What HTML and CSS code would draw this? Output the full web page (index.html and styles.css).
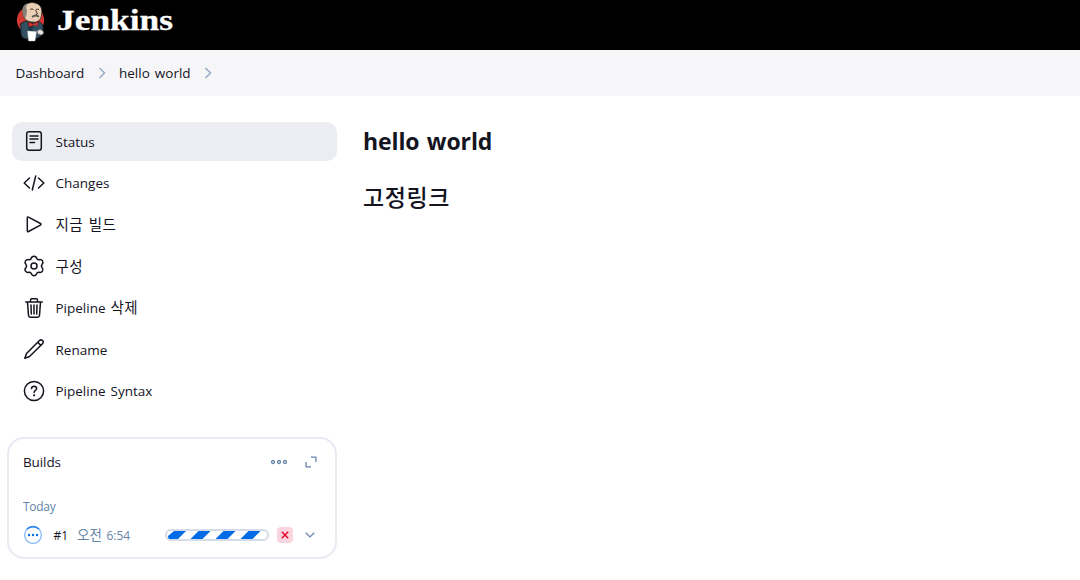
FILE: index.html
```html
<!DOCTYPE html>
<html lang="ko">
<head>
<meta charset="utf-8">
<title>hello world [Jenkins]</title>
<link rel="stylesheet" href="styles.css">
</head>
<body>
<header class="header">
  <svg class="mascot" width="30" height="42" viewBox="0 0 30 42">
    <circle cx="14.500" cy="20" r="13.600" fill="#d33833"/>
    <path d="M7 38 Q4 35 5 27 L4 24 Q9 20 15 21 L24 22 Q28 25 27 31 L25 36 L20 39 L10 39z" fill="#335061" stroke="#101a20" stroke-width=".8"/>
    <path d="M11 21 L20 22 L20 32 L13 31z" fill="#1d3444"/>
    <path d="M8 17 C5 8 9 3 16 2.500 C24 3 27 8 25.500 15 C25 20 21 23 17 22 C12 22 9 20 8 17z" fill="#e9d0b4" stroke="#3b2b25" stroke-width=".8"/>
    <path d="M7.800 17 C4.500 9 7.500 4 12 3.300 Q9 7 11 10 L10.500 15 L9.300 18z" fill="#858078"/>
    <path d="M14 9.500 q2-1.300 3.500 0 M20 9.500 q2-1 3 .3 M19.500 10 l2 4 -2 .5" fill="none" stroke="#4c3930" stroke-width="1"/>
    <path d="M16 17 q3.500-2.500 7-.3" fill="none" stroke="#5c5550" stroke-width="1.600"/>
    <path d="M12.500 22 L17 24 L22 21.500 L21.500 27 L17 25.500 L13 27z" fill="#d33833" stroke="#81120f" stroke-width=".6"/>
    <path d="M18 25 q4 0 6 5 l-3 3 -5-3z" fill="#335061"/>
    <path d="M11.500 31 L20.500 31.500 L19 41 L12.500 41z" fill="#fff" stroke="#bbb" stroke-width=".4"/>
    <path d="M21 31 q3-3 6 0 q2 3-2 4 l-3-1z" fill="#e7e2dc" stroke="#555" stroke-width=".5"/>
  </svg>
  <svg class="wordmark" width="120" height="38" viewBox="0 0 120 38"><text x="0" y="28.500" textLength="116" lengthAdjust="spacingAndGlyphs">Jenkins</text></svg>
</header>
<nav class="crumbs">
  <span class="crumb-root">Dashboard</span>
  <svg class="sep" width="8" height="12" viewBox="0 0 8 12"><path d="M1.500 1 L6.500 6 L1.500 11"/></svg>
  <span class="crumb-job">hello world</span>
  <svg class="sep" width="8" height="12" viewBox="0 0 8 12"><path d="M1.500 1 L6.500 6 L1.500 11"/></svg>
</nav>
<div class="page">
  <aside class="side">
    <div class="tasks">
      <div class="task active"><svg class="icon" viewBox="0 0 22 22"><rect x="3.700" y="1.700" width="14.600" height="18.600" rx="2.200"/><path d="M7 6h8M7 9h8M7 12.500h4.500"/></svg><span class="label">Status</span></div>
      <div class="task"><svg class="icon" viewBox="0 0 22 22"><path d="M6.500 6L1.200 11l5.300 5M15.500 6l5.300 5-5.300 5M12.700 4L9.300 18"/></svg><span class="label">Changes</span></div>
      <div class="task"><svg class="icon" viewBox="0 0 22 22"><path d="M4.300 4.800v13q0 1.200 1.200.7l11.900-6.400q1.300-.8 0-1.600L5.500 4.100q-1.200-.5-1.200.7z"/></svg><span class="label"><span class="ko">지금 빌드</span></span></div>
      <div class="task"><svg class="icon" viewBox="0 0 22 22"><path d="M8.200 3.600C9 .6 13 .6 13.800 3.600Q14.300 5 16 4.700C19 3.800 21.200 7.200 19.100 9.300Q17.700 11 19.100 12.700C21.200 14.800 19 18.200 16 17.300Q14.300 17 13.800 18.400C13 21.400 9 21.400 8.200 18.400Q7.700 17 6 17.300C3 18.200.8 14.800 2.900 12.700Q4.300 11 2.900 9.300C.8 7.200 3 3.800 6 4.700Q7.700 5 8.200 3.600z"/><circle cx="11" cy="11" r="3"/></svg><span class="label"><span class="ko">구성</span></span></div>
      <div class="task"><svg class="icon" viewBox="0 0 22 22"><path d="M2.800 5h16.400M4.500 5l1 13.500q.2 1.800 1.800 1.800h7.400q1.600 0 1.800-1.800l1-13.500M7.500 5V3q0-1.300 1.300-1.300h4.400q1.300 0 1.300 1.300v2M8 8l.3 9M11 8v9M14 8l-.3 9"/></svg><span class="label">Pipeline <span class="ko">삭제</span></span></div>
      <div class="task"><svg class="icon" viewBox="0 0 22 22"><path d="M1.800 20.200L3.500 15.500 16.200 2.700q1.600-1.500 3.300-.2 1.500 1.500 0 3.200L6.500 18.500zM14.700 4.200l3.200 3.200"/></svg><span class="label">Rename</span></div>
      <div class="task"><svg class="icon" viewBox="0 0 22 22"><circle cx="11" cy="11" r="9.600"/><path d="M8.500 8.600q.2-2.300 2.600-2.300 2.500.1 2.500 2.200 0 1.300-1.400 2.100-1.100.7-1.100 2"/><circle class="dot" cx="11.100" cy="15.300" r="1.100"/></svg><span class="label">Pipeline Syntax</span></div>
    </div>
    <section class="builds">
      <div class="builds-head">
        <span class="builds-title">Builds</span>
        <svg class="tool more" width="18" height="6" viewBox="0 0 18 6"><circle cx="3" cy="3" r="1.500"/><circle cx="9" cy="3" r="1.500"/><circle cx="15" cy="3" r="1.500"/></svg>
        <svg class="tool expand" width="12" height="12" viewBox="0 0 12 12"><path d="M6 1.200h4.900V6M1.100 6v4.900H6"/></svg>
      </div>
      <div class="today">Today</div>
      <div class="build">
        <svg class="running" width="20" height="20" viewBox="0 0 20 20"><circle class="ring" cx="10" cy="10" r="8.400"/><path class="arc" d="M4.100 4A8.400 8.400 0 0 1 15.900 4"/><circle cx="6" cy="10" r="1.200"/><circle cx="10" cy="10" r="1.200"/><circle cx="14" cy="10" r="1.200"/></svg>
        <span class="number">#1</span>
        <span class="time"><span class="ampm">오전</span> 6:54</span>
        <svg class="progress" width="104" height="12" viewBox="0 0 104 12">
          <rect x="1" y="1" width="102" height="10" rx="5"/>
          <path d="M9 2h12l-8 8H4q-1-1-1-3zM33.500 2h12l-8 8h-12zM58.500 2h12l-8 8h-12zM83.500 2h12l-8 8h-12z"/>
        </svg>
        <span class="stop"><svg width="8" height="8" viewBox="0 0 8 8"><path d="M.8.8l6.400 6.400M7.200.8L.8 7.200"/></svg></span>
        <svg class="tool chevron" width="10" height="6" viewBox="0 0 10 6"><path d="M.8.800L5 4.900 9.200.8"/></svg>
      </div>
    </section>
  </aside>
  <main class="main">
    <h1 class="title">hello world</h1>
    <h2 class="subtitle">고정링크</h2>
  </main>
</div>
</body>
</html>
```
FILE: styles.css
```css
* { box-sizing: border-box; }
body { margin: 0; background: #fff; color: #14141f; font: 13.5px/20px "Open Sans", "Noto Sans CJK KR", sans-serif; word-spacing: 1.5px; white-space: nowrap; }
svg { display: block; flex: none; }
.header { height: 50px; background: #000; display: flex; align-items: flex-start; padding-left: 16px; }
.wordmark { margin: 1px 0 0 11px; overflow: visible; }
.wordmark text { font: bold 29px "Liberation Serif", serif; fill: #fff; stroke: #fff; stroke-width: .3; }
.crumbs { height: 46px; background: #f6f6f9; display: flex; align-items: center; padding-left: 15.500px; }
.crumb-root { width: 82.500px; letter-spacing: -.1px; }
.crumb-job { width: 85px; margin-left: 13px; }
.sep { fill: none; stroke: #9aadc6; stroke-width: 1.6; }
.page { display: flex; }
.side { width: 337px; padding: 26px 0 0 7px; flex: none; }
.tasks { padding-left: 5px; display: grid; grid-auto-rows: 38.600px; gap: 3px; }
.task { display: flex; align-items: center; padding-left: 11px; border-radius: 10px; }
.active { background: #ecedf3; }
.icon { width: 22px; height: 22px; fill: none; stroke: #14141f; stroke-width: 1.5; stroke-linecap: round; stroke-linejoin: round; }
.icon .dot { fill: #14141f; stroke: none; }
.label { margin-left: 10.500px; padding-top: 1px; }
.ko { font-size: 14.500px; letter-spacing: .3px; word-spacing: 2px; line-height: 18px; }
.builds { margin-top: 27px; height: 122px; border: 2px solid #eaeaf3; border-radius: 17px; padding: 13px 14px 0; }
.builds-head { display: flex; align-items: center; height: 20px; }
.builds-title { width: 247px; letter-spacing: -.1px; }
.tool { fill: none; stroke: #6684a8; stroke-width: 1.3; }
.expand { margin-left: 17px; }
.today { margin-top: 26px; height: 18px; line-height: 18px; font-size: 12px; letter-spacing: -.3px; color: #6684a8; }
.build { display: flex; align-items: center; height: 20px; margin-top: 9px; font-size: 12px; }
.running { fill: #006be6; }
.running .ring { fill: none; stroke: #8bbcf3; stroke-width: 1.4; }
.running .arc { fill: none; stroke: #2b84ec; stroke-width: 1.7; }
.number { width: 23.500px; margin-left: 10.500px; padding-top: 2px; }
.time { width: 88px; color: #6684a8; padding-top: 2px; }
.ampm { font-size: 13.500px; line-height: 18px; }
.progress rect { fill: #fff; stroke: #d5dce7; stroke-width: 2; }
.progress path { fill: #006be6; }
.stop { width: 16px; height: 16px; margin-left: 8px; border-radius: 4px; background: #fbd5dd; display: grid; place-items: center; }
.stop path { stroke: #e6002b; stroke-width: 1.4; fill: none; }
.chevron { margin-left: 12px; }
.main { padding: 28px 0 0 26px; }
.title { margin: 0; font-size: 23px; line-height: 34px; font-weight: 700; letter-spacing: -.1px; }
.subtitle { margin: 22px 0 0; font-size: 23px; line-height: 34px; font-weight: 500; letter-spacing: .6px; }
```
